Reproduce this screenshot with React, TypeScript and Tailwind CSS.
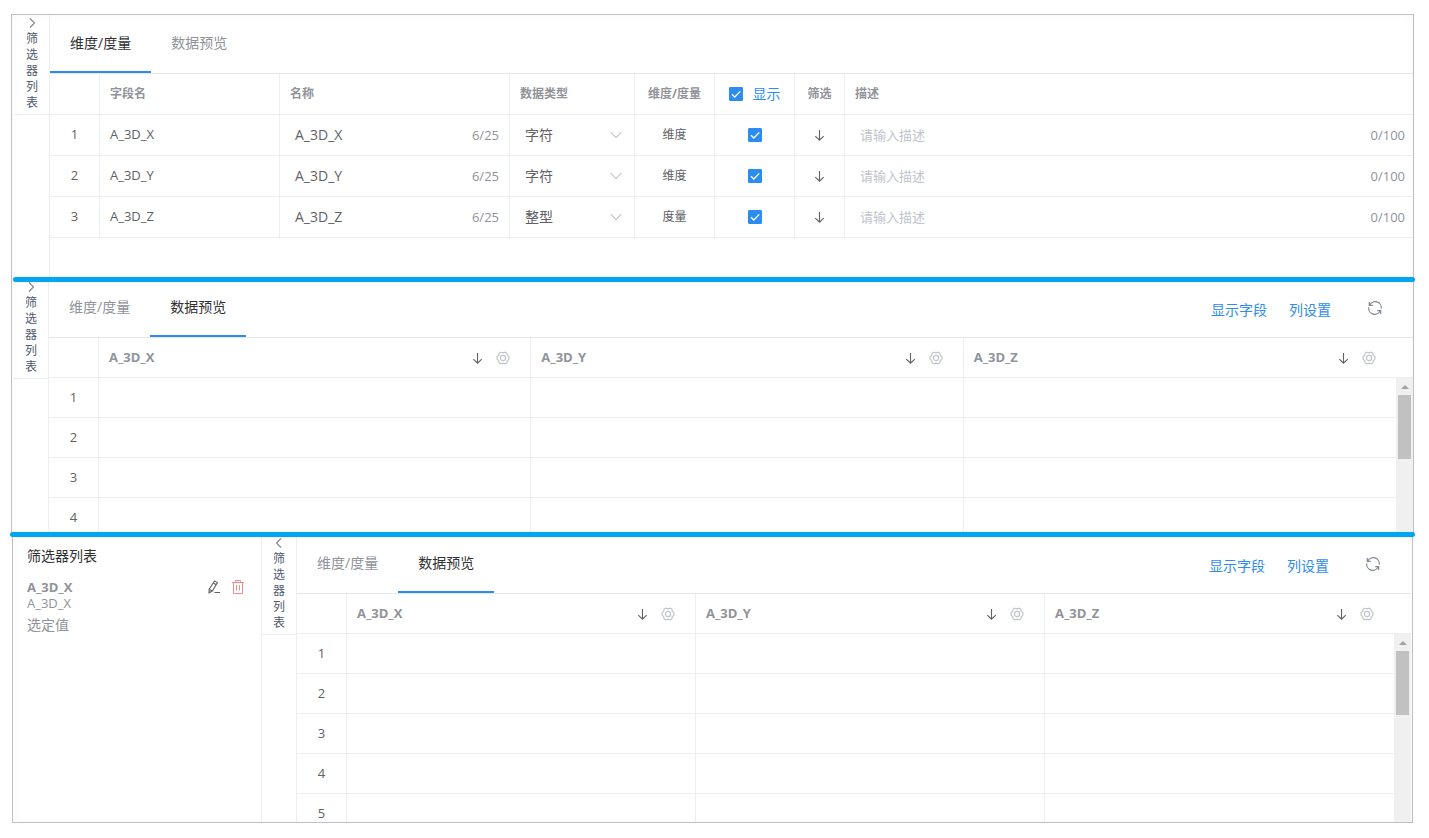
import { useState, type ReactNode } from 'react';
import clsx from 'clsx';

type TabKey = 'fields' | 'preview';

interface FieldRow {
  name: string;
  type: string;
  role: string;
}

const FIELDS: FieldRow[] = [
  { name: 'A_3D_X', type: '字符', role: '维度' },
  { name: 'A_3D_Y', type: '字符', role: '维度' },
  { name: 'A_3D_Z', type: '整型', role: '度量' },
];

const FIELD_TYPES = ['字符', '整型'];

/* ---------- Icons ---------- */

function ChevronIcon({ direction }: { direction: 'left' | 'right' | 'down' }) {
  const paths = {
    left: 'M8 1.5 3.5 6 8 10.5',
    right: 'M4 1.5 8.5 6 4 10.5',
    down: 'M0.8 3.2 6 8.6 11.2 3.2',
  };
  return (
    <svg viewBox="0 0 12 12" className="w-3 h-3" fill="none" stroke="currentColor" strokeWidth="1.1">
      <path d={paths[direction]} />
    </svg>
  );
}

function ArrowDownIcon() {
  return (
    <svg viewBox="0 0 12 12" className="w-3 h-3" fill="none" stroke="currentColor" strokeWidth="1.1">
      <path d="M5.5 1v10.2M1.3 7.2l4.2 4 4.2-4" />
    </svg>
  );
}

function GearIcon() {
  return (
    <svg viewBox="0 0 14 14" className="w-3.5 h-3.5" fill="none" stroke="currentColor" strokeWidth="1.2">
      <path d="M4.7 1.2 7 1.9l2.3-.7 1.5.9.5 2.2 1.7 1.6v2.2l-1.7 1.6-.5 2.2-1.5.9L7 12.1l-2.3.7-1.5-.9-.5-2.2L1 8.1V5.9l1.7-1.6.5-2.2z" />
      <circle cx="7" cy="7" r="2.6" />
    </svg>
  );
}

function RefreshIcon() {
  return (
    <svg viewBox="0 0 14 14" className="w-3.5 h-3.5" fill="none" stroke="currentColor" strokeWidth="1.2">
      <path d="M1.8 4.2A6 6 0 0 1 13.2 7.6M12.2 9.8A6 6 0 0 1 .8 6.4" />
      <path d="M1.3 1v3.4h3.4M12.7 13V9.6H9.3" />
    </svg>
  );
}

function EditIcon() {
  return (
    <svg viewBox="0 0 14 14" className="w-3.5 h-3.5" fill="none" stroke="currentColor" strokeWidth="1.1">
      <path d="M7.6.9 10.4 2.6 5.4 11 2 12.8 2.2 9.3z" />
      <path d="M6.4 3 9.2 4.7M2.3 9.4l3 1.6M7.5 12.5H13" />
    </svg>
  );
}

function TrashIcon() {
  return (
    <svg viewBox="0 0 14 14" className="w-3.5 h-3.5" fill="none" stroke="currentColor">
      <path d="M1 2.5h12M4.5 2.5v-2h5v2M2.5 2.5v11h9v-11M5.5 5v5.5M8.5 5v5.5" />
    </svg>
  );
}

/* ---------- Shared pieces ---------- */

function Checkbox({ label, children }: { label: string; children?: ReactNode }) {
  return (
    <label className="inline-flex items-center gap-2.5 cursor-pointer align-middle">
      <span className="relative flex w-3.5 h-3.5">
        <input
          type="checkbox"
          defaultChecked
          aria-label={label}
          className="peer appearance-none w-3.5 h-3.5 rounded-[1px] border border-[#dcdee2] checked:bg-[#2d8cf0] checked:border-[#2d8cf0]"
        />
        <svg
          viewBox="0 0 14 14"
          className="absolute inset-0 hidden peer-checked:block pointer-events-none"
          fill="none"
          stroke="white"
          strokeWidth="1.3"
        >
          <path d="M3 7.2 5.8 10l5.5-5.6" />
        </svg>
      </span>
      {children}
    </label>
  );
}

function FilterRail({ open }: { open: boolean }) {
  return (
    <div className="w-[35px] shrink-0 border-r border-[#ebeef5]">
      <button className="w-full flex flex-col items-center pb-[3px] border-b border-[#ebeef5] text-xs leading-4 text-[#515a6e] cursor-pointer">
        <span className="h-4 flex items-center text-[#808695]">
          <ChevronIcon direction={open ? 'left' : 'right'} />
        </span>
        <span className="w-3 break-all">筛选器列表</span>
      </button>
    </div>
  );
}

function TabBar({ initial, children }: { initial: TabKey; children?: ReactNode }) {
  const [active, setActive] = useState<TabKey>(initial);
  const tabs: { key: TabKey; label: string }[] = [
    { key: 'fields', label: '维度/度量' },
    { key: 'preview', label: '数据预览' },
  ];

  return (
    <div className="h-[59px] flex items-end justify-between border-b border-[#e4e7ed]">
      <div className="flex">
        {tabs.map((tab) => (
          <button
            key={tab.key}
            onClick={() => setActive(tab.key)}
            className={clsx(
              'px-5 pb-[17px] border-b-2 text-sm leading-[22px] cursor-pointer',
              active === tab.key ? 'border-[#2d8cf0] text-[#303133]' : 'border-transparent text-[#909399]'
            )}
          >
            {tab.label}
          </button>
        ))}
      </div>
      {children}
    </div>
  );
}

function PreviewActions() {
  return (
    <div className="flex items-center gap-[22px] pr-[31px] pb-4 text-sm leading-[22px] text-[#2d8cf0]">
      <button className="cursor-pointer">显示字段</button>
      <button className="cursor-pointer">列设置</button>
      <button title="刷新" className="ml-[15px] pb-1 text-[#808695] cursor-pointer">
        <RefreshIcon />
      </button>
    </div>
  );
}

/* ---------- Tables ---------- */

function FieldTable() {
  const head = 'h-[41px] px-2.5 border-b border-r border-[#ebeef5] text-xs font-bold text-left';
  const cell = 'h-[41px] px-2.5 border-b border-r border-[#ebeef5]';

  return (
    <table className="w-full table-fixed border-separate border-spacing-0 text-[13px] text-[#606266]">
      <colgroup>
        <col className="w-[50px]" />
        <col className="w-[180px]" />
        <col className="w-[230px]" />
        <col className="w-[125px]" />
        <col className="w-20" />
        <col className="w-20" />
        <col className="w-[50px]" />
        <col />
      </colgroup>
      <thead className="text-[#909399]">
        <tr>
          <th className={head}></th>
          <th className={head}>字段名</th>
          <th className={head}>名称</th>
          <th className={head}>数据类型</th>
          <th className={head}>
            <div className="flex justify-center whitespace-nowrap">维度/度量</div>
          </th>
          <th className={head}>
            <div className="flex justify-center">
              <Checkbox label="显示">
                <span className="text-sm font-normal text-[#2d8cf0]">显示</span>
              </Checkbox>
            </div>
          </th>
          <th className={head}>
            <div className="flex justify-center whitespace-nowrap">筛选</div>
          </th>
          <th className="h-[41px] px-2.5 border-b border-[#ebeef5] text-xs font-bold text-left">描述</th>
        </tr>
      </thead>
      <tbody>
        {FIELDS.map((field, index) => (
          <tr key={field.name}>
            <td className={clsx(cell, 'text-center')}>{index + 1}</td>
            <td className={cell}>{field.name}</td>
            <td className={cell}>
              <div className="flex items-center justify-between pl-[5px]">
                <input
                  aria-label="名称"
                  defaultValue={field.name}
                  maxLength={25}
                  className="w-36 text-sm outline-none bg-transparent"
                />
                <span className="pt-0.5 text-[#909399]">{field.name.length}/25</span>
              </div>
            </td>
            <td className={cell}>
              <div className="relative flex items-center">
                <select
                  aria-label="数据类型"
                  defaultValue={field.type}
                  className="appearance-none w-full pl-[5px] text-sm outline-none bg-transparent cursor-pointer"
                >
                  {FIELD_TYPES.map((type) => (
                    <option key={type}>{type}</option>
                  ))}
                </select>
                <span className="absolute right-0.5 text-[#c0c4cc] pointer-events-none">
                  <ChevronIcon direction="down" />
                </span>
              </div>
            </td>
            <td className={clsx(cell, 'text-center text-xs')}>{field.role}</td>
            <td className={cell}>
              <div className="flex justify-center">
                <Checkbox label={`显示 ${field.name}`} />
              </div>
            </td>
            <td className={cell}>
              <button title="筛选" className="flex mx-auto cursor-pointer">
                <ArrowDownIcon />
              </button>
            </td>
            <td className="h-[41px] pl-[15px] pr-2 border-b border-[#ebeef5]">
              <div className="flex items-center pt-0.5">
                <input
                  aria-label="描述"
                  placeholder="请输入描述"
                  maxLength={100}
                  className="flex-1 min-w-0 outline-none bg-transparent placeholder:text-[#c0c4cc]"
                />
                <span className="text-[#909399]">0/100</span>
              </div>
            </td>
          </tr>
        ))}
      </tbody>
    </table>
  );
}

function PreviewTable({ rows }: { rows: number }) {
  return (
    <div className="flex">
      <div className="flex-1 min-w-0">
        <table className="w-full table-fixed border-separate border-spacing-0 text-[13px] text-[#606266]">
          <colgroup>
            <col className="w-[50px]" />
            <col />
            <col />
            <col />
          </colgroup>
          <thead className="text-[#909399]">
            <tr>
              <th className="h-10 border-b border-r border-[#ebeef5]"></th>
              {FIELDS.map((field) => (
                <th key={field.name} className="h-10 pl-2.5 pr-5 border-b border-r border-[#ebeef5] last:border-r-0">
                  <div className="flex items-center">
                    <span className="flex-1 text-left font-bold">{field.name}</span>
                    <button title="筛选" className="text-[#606266] cursor-pointer">
                      <ArrowDownIcon />
                    </button>
                    <button title="设置" className="ml-3 text-[#c0c4cc] cursor-pointer">
                      <GearIcon />
                    </button>
                  </div>
                </th>
              ))}
            </tr>
          </thead>
          <tbody>
            {Array.from({ length: rows }, (_, index) => (
              <tr key={index}>
                <td className="h-10 border-b border-r border-[#ebeef5] text-center">{index + 1}</td>
                {FIELDS.map((field) => (
                  <td key={field.name} className="h-10 border-b border-r border-[#ebeef5] last:border-r-0"></td>
                ))}
              </tr>
            ))}
          </tbody>
        </table>
      </div>

      {/* Scrollbar */}
      <div className="w-[17px] flex flex-col">
        <div className="h-10 shrink-0 border-b border-[#ebeef5]"></div>
        <div className="flex-1 flex flex-col items-center bg-[#f0f0f0]">
          <span className="h-[17px] flex items-center">
            <svg viewBox="0 0 8 4" className="w-2 h-1" fill="#a3a3a3">
              <path d="M4 0l4 4H0z" />
            </svg>
          </span>
          <span className="w-[13px] h-16 bg-[#c1c1c1]"></span>
        </div>
      </div>
    </div>
  );
}

function FilterList() {
  return (
    <aside className="w-[249px] shrink-0 pt-2.5 pl-3.5 pr-4 border-r border-[#ebeef5] text-[13px] text-[#909399]">
      <h2 className="text-sm leading-[22px] text-[#303133]">筛选器列表</h2>
      <div className="mt-3 flex items-center leading-4">
        <span className="flex-1 font-bold">A_3D_X</span>
        <button title="编辑" className="text-[#606266] cursor-pointer">
          <EditIcon />
        </button>
        <button title="删除" className="ml-2.5 text-[#f78989] cursor-pointer">
          <TrashIcon />
        </button>
      </div>
      <p className="leading-4">A_3D_X</p>
      <p className="mt-[3px] text-sm leading-[22px]">选定值</p>
    </aside>
  );
}

export default function App() {
  return (
    <main className="pt-3.5 pl-[11px] pr-[15px] pb-[15px] bg-white font-['Open_Sans','Noto_Sans_CJK_SC',sans-serif]">
      {/* Field settings */}
      <section className="h-[265px] flex pl-[3px] border border-b-0 border-[#c0c0c0] shadow-[inset_0_0_10px_rgba(60,60,200,0.04)]">
        <FilterRail open={false} />
        <div className="flex-1 min-w-0">
          <TabBar initial="fields" />
          <FieldTable />
        </div>
      </section>

      {/* Data preview, filters collapsed */}
      <section className="relative border-x border-[#c0c0c0] shadow-[inset_0_0_10px_rgba(60,60,200,0.04)]">
        <div className="absolute -top-0.5 left-px -right-0.5 h-[5px] rounded-full bg-[#00a5f3]"></div>
        <div className="h-64 flex pl-0.5 overflow-hidden">
          <FilterRail open={false} />
          <div className="flex-1 min-w-0">
            <TabBar initial="preview">
              <PreviewActions />
            </TabBar>
            <PreviewTable rows={4} />
          </div>
        </div>
      </section>

      {/* Data preview, filters expanded */}
      <section className="relative mx-px border-x border-b border-[#c0c0c0] shadow-[inset_0_0_10px_rgba(60,60,200,0.04)]">
        <div className="absolute -top-[3px] -inset-x-[3px] h-[5px] rounded-full bg-[#00a5f3]"></div>
        <div className="h-[287px] flex pr-px overflow-hidden">
          <FilterList />
          <FilterRail open />
          <div className="flex-1 min-w-0">
            <TabBar initial="preview">
              <PreviewActions />
            </TabBar>
            <PreviewTable rows={5} />
          </div>
        </div>
      </section>
    </main>
  );
}
